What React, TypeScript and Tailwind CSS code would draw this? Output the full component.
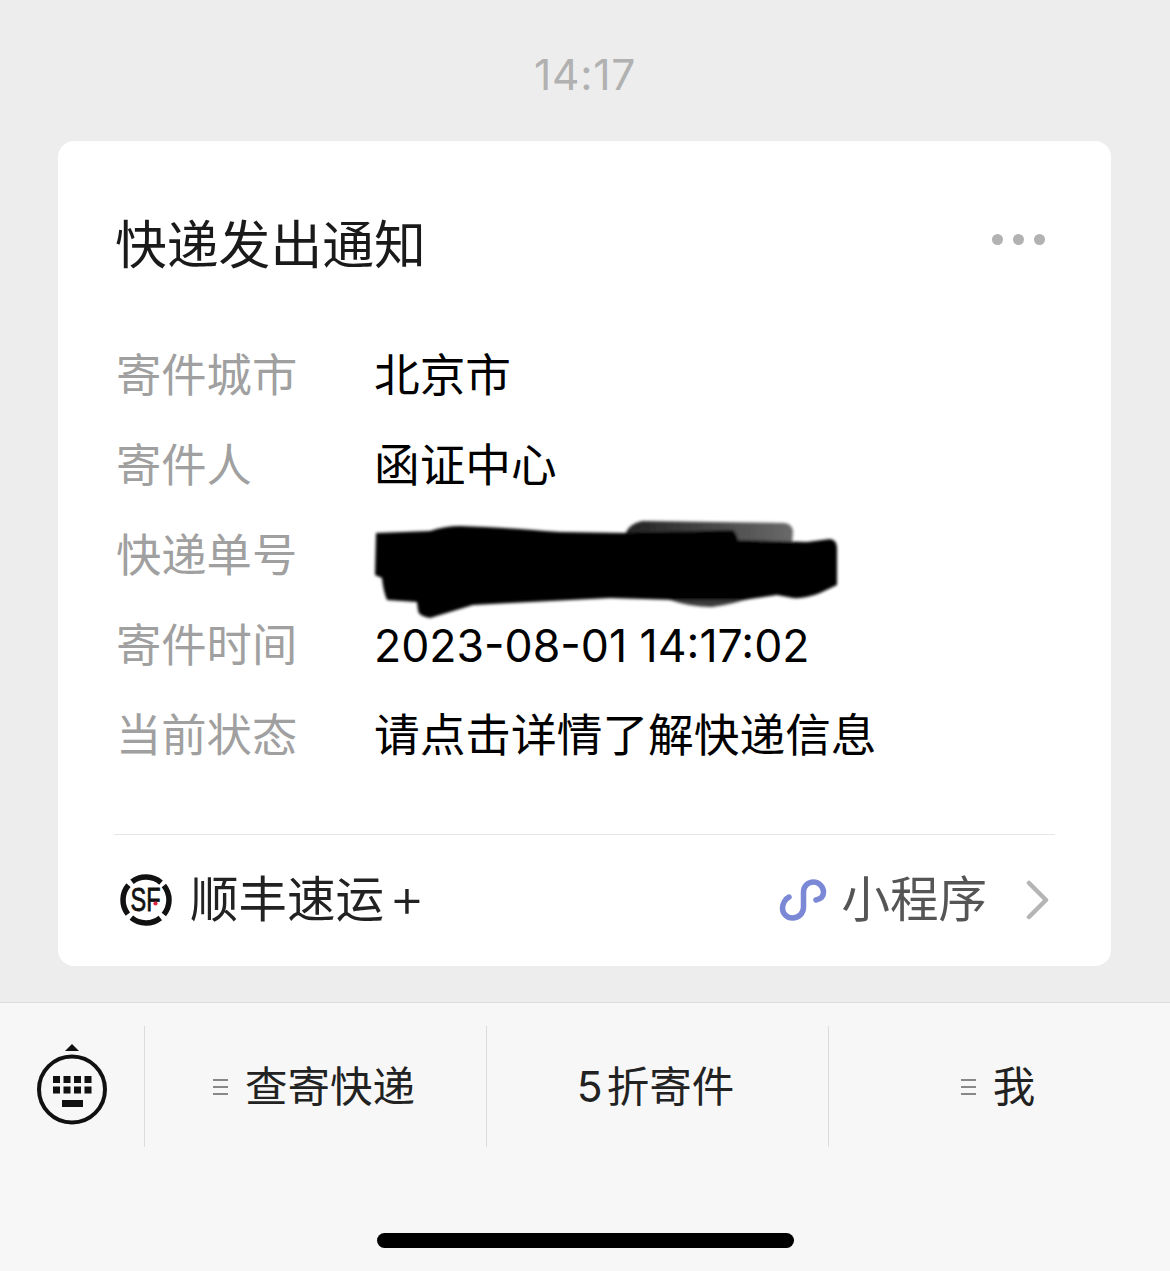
const font = "font-['Inter','Noto_Sans_CJK_SC',sans-serif]"

const rows = [
  { label: "寄件城市", value: "北京市" },
  { label: "寄件人", value: "函证中心" },
  { label: "快递单号", value: "" },
  { label: "寄件时间", value: "2023-08-01 14:17:02" },
  { label: "当前状态", value: "请点击详情了解快递信息" },
]

const Redaction = () => (
  <svg className="absolute left-[-5px] top-[-38px]" width="480" height="104" viewBox="369 518 480 104">
    <defs>
      <filter id="soft">
        <feGaussianBlur stdDeviation="1.5" />
      </filter>
      <linearGradient id="patch" x1="0" x2="1" y1="0" y2="0">
        <stop offset="0" stopColor="#222" />
        <stop offset="1" stopColor="#6a6a6a" />
      </linearGradient>
    </defs>
    <g filter="url(#soft)">
      <path d="M625 535 Q628 524 642 521 L785 523 Q793 525 793 532 L792 545 L625 545Z" fill="url(#patch)" />
      <path d="M670 595 L760 595 Q735 604 712 607 Q690 607 670 600Z" fill="#3a3a3a" />
      <path
        d="M376 533 L430 531 Q445 526 460 526 Q500 527 560 532 L623 533 L733 530 Q737 534 738 540 L807 542 L830 539 Q837 540 837 548 L837 585 L820 593 Q805 599 793 598 L777 595 L743 600 L677 600 L610 598 L510 603 L473 605 L430 618 Q418 616 418 610 L417 602 L387 600 Q383 590 382 578 L375 575Z"
        fill="#000"
      />
    </g>
  </svg>
)

const SfLogo = () => (
  <svg width="54" height="54" viewBox="0 0 54 54">
    <circle cx="27" cy="27" r="23" fill="none" stroke="#111" strokeWidth="5.5" strokeDasharray="31 5.1" strokeDashoffset="-2.5" transform="rotate(-45 27 27)" />
    <text x="11.5" y="38" fontFamily="Liberation Sans" fontWeight="400" fontSize="33" stroke="#111" strokeWidth="0.8" fill="#111" textLength="30" lengthAdjust="spacingAndGlyphs">SF</text>
    <circle cx="36.5" cy="30.5" r="2.1" fill="#e0233c" />
  </svg>
)

const MiniProgramIcon = () => (
  <svg width="48" height="44" viewBox="0 0 48 44" fill="none">
    <path
      d="M10 19 C6 21 3.5 26 3.5 30 C3.5 36 8 40 13.5 40 C20 40 24.5 35 24.5 29 L24.5 14 C24.5 8 29 4 34.5 4 C40 4 44.5 9 44.5 14 C44.5 18 42 21 37 22"
      stroke="#7b88d6"
      strokeWidth="5.5"
      strokeLinecap="round"
    />
  </svg>
)

const KeyboardIcon = () => (
  <svg width="72" height="84" viewBox="0 0 72 84">
    <path d="M36 1 L43 8 L29 8Z" fill="#111" />
    <circle cx="36" cy="46.5" r="33" fill="none" stroke="#111" strokeWidth="4" />
    {[17, 27.5, 38, 48.5].map((x) => (
      <g key={x}>
        <rect x={x} y="33" width="7" height="7" fill="#111" />
        <rect x={x} y="43.5" width="7" height="7" fill="#111" />
      </g>
    ))}
    <rect x="26" y="57" width="21" height="7" fill="#111" />
  </svg>
)

const MenuMark = () => (
  <span className="flex w-[15px] flex-col gap-[5px]">
    <span className="h-[2px] bg-[#888]" />
    <span className="h-[2px] bg-[#888]" />
    <span className="h-[2px] bg-[#888]" />
  </span>
)

export default function App() {
  return (
    <div className={`flex h-[1271px] flex-col bg-[#ededed] ${font}`}>
      {/* time */}
      <div className="flex h-[141px] justify-center pt-[50px] text-[42.5px] leading-[50px] tracking-[0.7px] text-[#b1b1b1]">14:17</div>

      {/* card */}
      <div className="mx-[58px] h-[825px] w-[1053px] rounded-[16px] bg-white">
        <div className="flex h-[190px] items-start justify-between pl-[57px] pr-[66px] pt-[68px]">
          <div className="text-[51.8px] leading-[72px] text-[#1a1a1a]">快递发出通知</div>
          <div className="mt-[25px] flex gap-[10px]">
            <span className="size-[11px] rounded-full bg-[#b2b2b2]" />
            <span className="size-[11px] rounded-full bg-[#b2b2b2]" />
            <span className="size-[11px] rounded-full bg-[#b2b2b2]" />
          </div>
        </div>

        {/* fields */}
        <div className="flex flex-col pl-[58px]">
          {rows.map((r) => (
            <div key={r.label} className="flex h-[90px] items-center">
              <div className="w-[258px] text-[45.3px] text-[#a0a0a0]">{r.label}</div>
              <div className={r.label === "寄件时间" ? "relative text-[44.6px] text-black" : "relative text-[45.7px] text-black"}>
                {r.value}
                {r.label === "快递单号" && <Redaction />}
              </div>
            </div>
          ))}
        </div>

        {/* footer */}
        <div className="mx-[56px] mt-[53px] flex h-[131px] items-center justify-between border-t border-[#e6e6e6] pl-[5px] pr-[4px]">
          <div className="flex items-center">
            <SfLogo />
            <span className="ml-[17px] text-[48.5px] text-[#222]">顺丰速运</span>
            <span className="mb-[5px] ml-[5px] text-[55px] font-light leading-none text-[#222]">+</span>
          </div>
          <div className="flex items-center">
            <MiniProgramIcon />
            <span className="ml-[14px] text-[48.5px] text-[#555]">小程序</span>
            <svg className="ml-[38px]" width="26" height="40" viewBox="0 0 26 40" fill="none">
              <path d="M4 3 L21 20 L4 37" stroke="#b5b5b5" strokeWidth="4.5" strokeLinecap="round" strokeLinejoin="round" />
            </svg>
          </div>
        </div>
      </div>

      {/* bottom bar */}
      <div className="mt-[36px] flex flex-1 flex-col border-t border-[#dcdcdc] bg-[#f7f7f7]">
        <div className="mt-[23px] flex h-[121px]">
          <div className="flex w-[144px] items-start justify-center pt-[17px]">
            <KeyboardIcon />
          </div>
          <div className="flex flex-1">
            <div className="flex w-[342px] items-center justify-center gap-[17px] border-l border-[#dcdcdc] pr-[3px] text-[42.5px] text-[#222]">
              <MenuMark />
              <span>查寄快递</span>
            </div>
            <div className="flex w-[342px] items-center justify-center border-l border-[#dcdcdc] pr-[4px] text-[42.5px] text-[#222]">
              <span>5</span>
              <span className="ml-[4px]">折寄件</span>
            </div>
            <div className="flex flex-1 items-center justify-center gap-[17px] border-l border-[#dcdcdc] pr-[3px] text-[42.5px] text-[#222]">
              <MenuMark />
              <span>我</span>
            </div>
          </div>
        </div>
        <div className="mt-[86px] flex justify-center pl-[1px]">
          <div className="h-[15px] w-[417px] rounded-full bg-black" />
        </div>
      </div>
    </div>
  )
}
